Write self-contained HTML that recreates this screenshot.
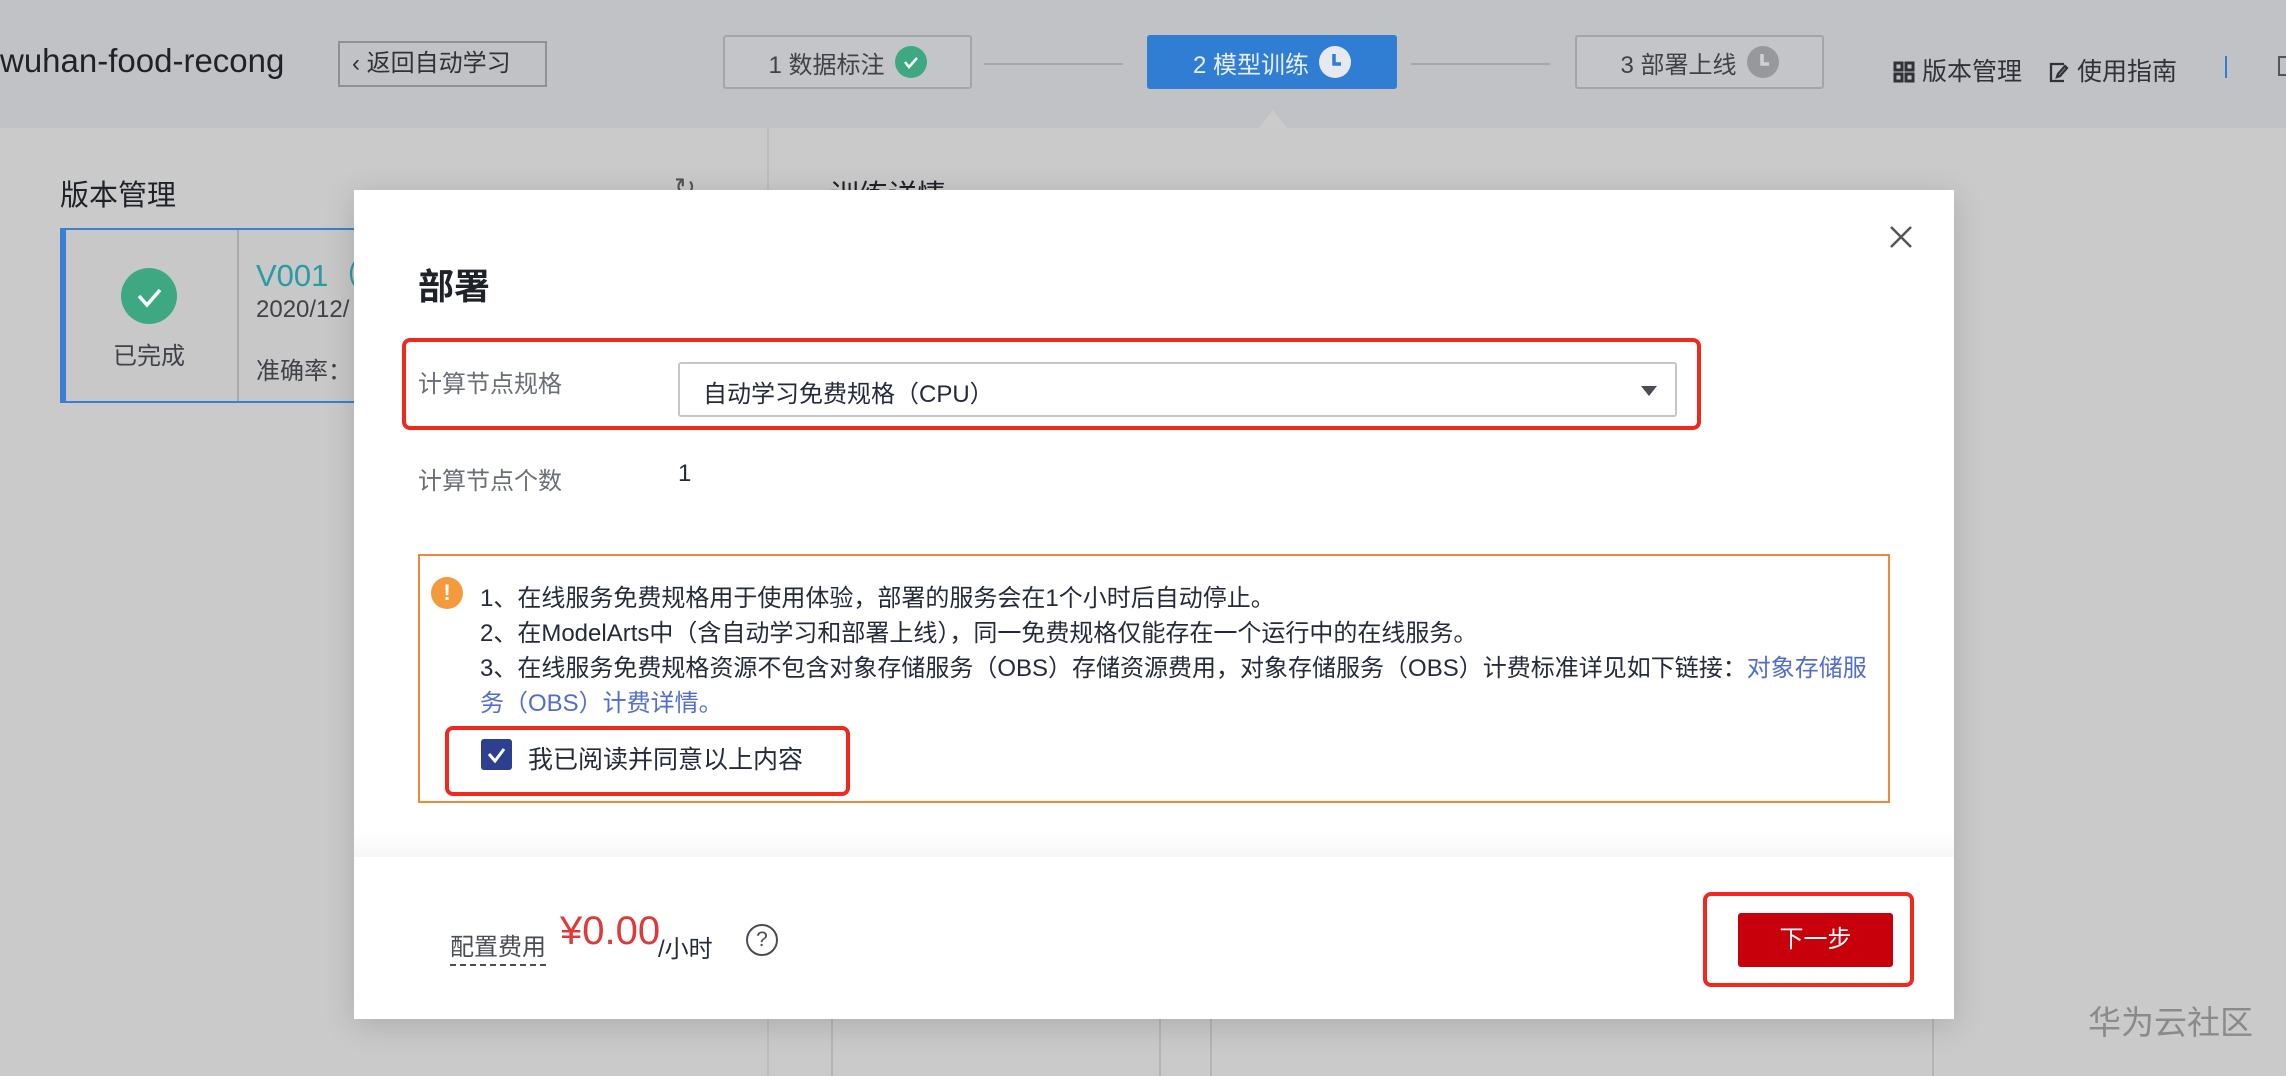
<!DOCTYPE html>
<html><head><meta charset="utf-8">
<style>
*{margin:0;padding:0;box-sizing:border-box}
body{width:2286px;height:1076px;overflow:hidden;background:#cacaca;font-family:"Liberation Sans","Noto Sans CJK SC",sans-serif;position:relative;color:#252b3a}
.a{position:absolute;white-space:nowrap}
.hdr{position:absolute;left:0;top:0;width:2286px;height:128px;background:#c1c2c5}
.step{position:absolute;top:35px;height:54px;width:249px;border:2px solid #a4a5a8;border-radius:3px;background:#c4c5c8;font-size:24px;color:#3f4248;display:flex;align-items:center;justify-content:center;gap:10px}
.ic{width:32px;height:32px;border-radius:50%;display:inline-block;position:relative}
.box{position:absolute;border:4px solid #f1281c;border-radius:8px}
.t{font-size:24px;color:#252b3a}
.w{font-size:24px;color:#252b3a}
</style></head><body>
<div class="hdr"></div>
<div class="a" style="left:0;top:42px;font-size:33px;color:#1f2228">wuhan-food-recong</div>
<div class="a" style="left:338px;top:41px;width:209px;height:46px;border:2px solid #8f9094;font-size:24px;color:#2f3238;line-height:42px;padding-left:12px">&lsaquo; 返回自动学习</div>
<div class="step" style="left:723px">1 数据标注 <span class="ic" style="background:#3ea882"><svg width="32" height="32"><path d="M10 16l4 5 8-9" stroke="#fff" stroke-width="2.5" fill="none"/></svg></span></div>
<div class="a" style="left:984px;top:63px;width:139px;height:2px;background:#a6a7aa"></div>
<div class="step" style="left:1147px;border:none;background:#2f7ed4;color:#e8eef7;width:250px">2 模型训练 <span class="ic" style="background:#e6eaf0"><svg width="32" height="32"><path d="M15 8v10h7" stroke="#2f7ed4" stroke-width="3.5" fill="none"/></svg></span></div>
<div class="a" style="left:1259px;top:110px;width:0;height:0;border-left:14px solid transparent;border-right:14px solid transparent;border-bottom:18px solid #cbcbcb"></div>
<div class="a" style="left:1411px;top:63px;width:139px;height:2px;background:#a6a7aa"></div>
<div class="step" style="left:1575px">3 部署上线 <span class="ic" style="background:#97989b"><svg width="32" height="32"><path d="M15 8v10h7" stroke="#d0d1d4" stroke-width="3.5" fill="none"/></svg></span></div>
<div class="a" style="left:1893px;top:52px;font-size:25px;color:#2f3238"><svg width="22" height="22" style="vertical-align:-3px"><g fill="none" stroke="#2f3238" stroke-width="3"><rect x="2" y="2" width="7" height="7"/><rect x="13" y="2" width="7" height="7"/><rect x="2" y="13" width="7" height="7"/><rect x="13" y="13" width="7" height="7"/></g></svg> 版本管理</div>
<div class="a" style="left:2048px;top:52px;font-size:25px;color:#2f3238"><svg width="22" height="22" style="vertical-align:-3px"><path d="M16 3H3v17h13M19 7l-7 8-3 1 1-3 7-8z" stroke="#2f3238" stroke-width="2.3" fill="none"/></svg> 使用指南</div>
<div class="a" style="left:2225px;top:56px;width:2px;height:22px;background:#2f7ed4"></div>
<div class="a" style="left:2278px;top:56px;width:8px;height:20px;border:2px solid #555;border-right:none"></div>

<div class="a" style="left:767px;top:128px;width:2px;height:948px;background:#bdbdbd"></div>
<div class="a" style="left:60px;top:172px;font-size:29px;color:#1f2228">版本管理</div>
<div class="a" style="left:674px;top:172px;font-size:26px;color:#555">↻</div>
<div class="a" style="left:830px;top:172px;font-size:29px;color:#1f2228">训练详情</div>
<div class="a" style="left:60px;top:228px;width:320px;height:175px;border:2px solid #3a7fd0;border-left:6px solid #3a7fd0;background:#c8c8c8"></div>
<div class="a" style="left:237px;top:230px;width:2px;height:171px;background:#aaa"></div>
<div class="a" style="left:121px;top:268px;width:56px;height:56px;border-radius:50%;background:#3ea882"><svg width="56" height="56"><path d="M18 28l8 9 13-15" stroke="#fff" stroke-width="3.5" fill="none"/></svg></div>
<div class="a" style="left:113px;top:336px;font-size:24px;color:#3f4248">已完成</div>
<div class="a" style="left:256px;top:250px;font-size:31px;color:#2a9ba5">V001（</div>
<div class="a" style="left:256px;top:296px;font-size:24px;color:#3f4248">2020/12/</div>
<div class="a" style="left:256px;top:351px;font-size:24px;color:#3f4248">准确率：</div>
<div class="a" style="left:831px;top:1010px;width:2px;height:66px;background:#b5b5b5"></div>
<div class="a" style="left:1159px;top:1010px;width:2px;height:66px;background:#b5b5b5"></div>
<div class="a" style="left:1210px;top:1010px;width:2px;height:66px;background:#b5b5b5"></div>
<div class="a" style="left:1932px;top:1010px;width:2px;height:66px;background:#b5b5b5"></div>
<div class="a" style="left:2088px;top:996px;font-size:33px;color:#8a8a8a">华为云社区</div>

<div class="a" style="left:354px;top:190px;width:1600px;height:829px;background:#fff;box-shadow:0 6px 30px rgba(0,0,0,.15)"></div>
<div class="a" style="left:354px;top:830px;width:1600px;height:27px;background:linear-gradient(#fff,#f7f7f7)"></div>
<div class="a" style="left:418px;top:258px;font-size:36px;font-weight:bold;color:#1f2228">部署</div>
<div class="a" style="left:1888px;top:224px"><svg width="26" height="26"><path d="M3 3l20 20M23 3L3 23" stroke="#555" stroke-width="2.5"/></svg></div>
<div class="box" style="left:402px;top:338px;width:1299px;height:92px"></div>
<div class="a" style="left:418px;top:364px;font-size:24px;color:#6a6e76">计算节点规格</div>
<div class="a" style="left:678px;top:362px;width:999px;height:55px;border:2px solid #c4c6cc;border-radius:3px"></div>
<div class="a t" style="left:703px;top:374px">自动学习免费规格（CPU）</div>
<div class="a" style="left:1641px;top:386px;width:0;height:0;border-left:8px solid transparent;border-right:8px solid transparent;border-top:10px solid #4a4d55"></div>
<div class="a" style="left:418px;top:461px;font-size:24px;color:#6a6e76">计算节点个数</div>
<div class="a t" style="left:678px;top:460px">1</div>

<div class="a" style="left:418px;top:554px;width:1472px;height:249px;border:2px solid #f0883a"></div>
<div class="a" style="left:431px;top:577px;width:32px;height:32px;border-radius:50%;background:#f59a3c;color:#fff;font-weight:bold;font-size:22px;text-align:center;line-height:32px">!</div>
<div class="a w" style="left:480px;top:578px">1、在线服务免费规格用于使用体验，部署的服务会在1个小时后自动停止。</div>
<div class="a w" style="left:480px;top:613px">2、在ModelArts中（含自动学习和部署上线），同一免费规格仅能存在一个运行中的在线服务。</div>
<div class="a w" style="left:480px;top:648px">3、在线服务免费规格资源不包含对象存储服务（OBS）存储资源费用，对象存储服务（OBS）计费标准详见如下链接：<span style="color:#526ecc">对象存储服</span></div>
<div class="a w" style="left:480px;top:683px;color:#526ecc">务（OBS）计费详情。</div>
<div class="box" style="left:445px;top:726px;width:405px;height:70px"></div>
<div class="a" style="left:481px;top:739px;width:31px;height:31px;border-radius:3px;background:#2d3f8f"><svg width="31" height="31"><path d="M8 15l6 7 9-12" stroke="#fff" stroke-width="3" fill="none"/></svg></div>
<div class="a t" style="left:528px;top:740px;font-size:25px">我已阅读并同意以上内容</div>

<div class="a" style="left:450px;top:927px;font-size:24px;color:#4a4d55;border-bottom:2px dashed #4a4d55;padding-bottom:2px">配置费用</div>
<div class="a" style="left:560px;top:909px;font-size:40px;color:#de3a3a">¥0.00</div>
<div class="a" style="left:658px;top:929px;font-size:24px;color:#252b3a">/小时</div>
<div class="a" style="left:746px;top:924px;width:32px;height:32px;border-radius:50%;border:2.5px solid #4a4d55;font-size:21px;text-align:center;line-height:27px;color:#4a4d55">?</div>
<div class="box" style="left:1703px;top:892px;width:211px;height:95px"></div>
<div class="a" style="left:1738px;top:913px;width:155px;height:54px;background:#c7000b;border-radius:3px;color:#fff;font-size:24px;text-align:center;line-height:54px">下一步</div>
</body></html>
